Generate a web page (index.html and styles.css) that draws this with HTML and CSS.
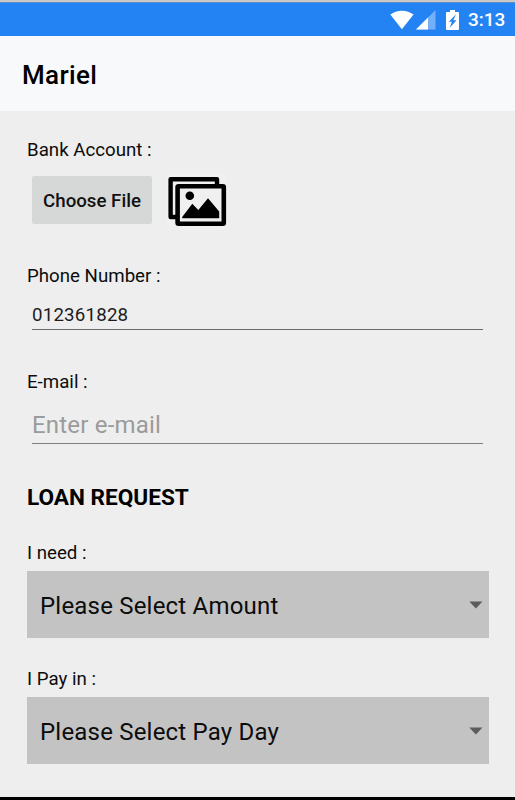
FILE: index.html
```html
<!DOCTYPE html>
<html lang="en">
<head>
    <meta charset="UTF-8" />
    <meta name="viewport" content="width=device-width, initial-scale=1.0" />
    <title>Mariel</title>
    <link rel="stylesheet" href="styles.css">
</head>
<body>
    <div class="screen">
        <div class="status-bar">
            <svg class="wifi" width="24" height="20" viewBox="0 0 24 20">
                <path d="M0.3 4.6C3.6 2 7.6 0.7 11.9 0.7s8.3 1.3 11.6 3.9L11.9 19.3z" fill="#fff"/>
            </svg>
            <svg class="signal" width="20" height="20" viewBox="0 0 20 20">
                <path d="M0 19.5L19.5 0v19.5z" fill="#73b0f8"/>
                <path d="M0 19.5L12 7.5v12z" fill="#fff"/>
            </svg>
            <svg class="battery" width="13" height="20" viewBox="0 0 13 20">
                <path d="M4 0h5v2h3q1 0 1 1v16q0 1-1 1H1q-1 0-1-1V3q0-1 1-1h3z" fill="#fff"/>
                <path d="M10 4.2L2.8 11.8h3L3.8 17.8l6.8-7.6H7.4z" fill="#2483f3"/>
            </svg>
            <span class="clock">3:13</span>
        </div>

        <div class="title-bar">
            <h1>Mariel</h1>
        </div>

        <form class="form">
            <div class="group group-file">
                <label class="label">Bank Account :</label>
                <div class="file-row">
                    <button type="button" class="button">Choose File</button>
                    <svg class="gallery" width="60" height="56" viewBox="0 0 60 56">
                        <rect width="60" height="56" fill="#f0f0f0"/>
                        <path d="M10 43H3.6V5.2H50V11" fill="none" stroke="#000" stroke-width="4.4" stroke-linejoin="round"/>
                        <rect x="10.6" y="12.3" width="46.2" height="37.4" rx="1" fill="#f0f0f0" stroke="#000" stroke-width="4.6"/>
                        <circle cx="22.8" cy="21.8" r="4.3"/>
                        <path d="M15.2 44.2V43L25.3 29.7 31.3 36.1 41 24.3 52.2 37.5v6.7z"/>
                    </svg>
                </div>
            </div>

            <div class="group group-phone">
                <label class="label" for="phone">Phone Number :</label>
                <input type="text" id="phone" class="input input-phone" value="012361828">
            </div>

            <div class="group group-email">
                <label class="label" for="email">E-mail :</label>
                <input type="text" id="email" class="input input-email" placeholder="Enter e-mail">
            </div>

            <h2>LOAN REQUEST</h2>

            <div class="group group-amount">
                <label class="label">I need :</label>
                <div class="select">
                    <span>Please Select Amount</span>
                    <svg width="14" height="8" viewBox="0 0 14 8"><path d="M0.3 0.4h13.2L6.9 7.4z" fill="#5c5c5c"/></svg>
                </div>
            </div>

            <div class="group">
                <label class="label">I Pay in :</label>
                <div class="select">
                    <span>Please Select Pay Day</span>
                    <svg width="14" height="8" viewBox="0 0 14 8"><path d="M0.3 0.4h13.2L6.9 7.4z" fill="#5c5c5c"/></svg>
                </div>
            </div>
        </form>
    </div>
</body>
</html>
```

FILE: styles.css
```css
* {
    box-sizing: border-box;
}

html, body {
    margin: 0;
    padding: 0;
    font-family: Roboto, "Liberation Sans", sans-serif;
    color: #0c0c0c;
}

.screen {
    display: flex;
    flex-direction: column;
    height: 800px;
    overflow: hidden;
    background: #eeeeee;
    border-top: 2px solid #c9c9c9;
    border-bottom: 3px solid #000;
}

.status-bar {
    display: flex;
    align-items: center;
    height: 34px;
    flex-shrink: 0;
    padding-right: 9px;
    background: #2483f3;
    border-top: 1px solid #5d8fc9;
}

.wifi {
    margin-left: auto;
}

.signal {
    margin-left: 2px;
}

.battery {
    margin-left: 10px;
    margin-right: 1px;
}

.clock {
    width: 38px;
    margin-left: 8px;
    padding-top: 1px;
    color: #fff;
    font-size: 19px;
    font-weight: 500;
    line-height: 24px;
    white-space: nowrap;
}

.title-bar {
    display: flex;
    align-items: center;
    height: 75px;
    flex-shrink: 0;
    padding: 3px 22px 0;
    background: #f8f9fb;
}

h1 {
    margin: 0;
    font-size: 26px;
    font-weight: 500;
    line-height: 32px;
    letter-spacing: 0.35px;
    color: #000;
}

.form {
    flex: 1;
    padding: 27px 26px 0 27px;
}

.label {
    display: block;
    font-size: 18.7px;
    line-height: 24px;
}

.group-file {
    height: 126px;
}

.file-row {
    display: flex;
    gap: 15px;
    padding: 14px 0 0 5px;
}

.button {
    width: 120px;
    height: 48px;
    padding: 2px 0 0;
    border: 0;
    border-radius: 2px;
    background: #d6d8d7;
    color: #111;
    font-family: inherit;
    font-size: 18.7px;
    font-weight: 500;
    white-space: nowrap;
}

.gallery {
    margin-top: -2px;
}

.input {
    display: block;
    width: 451px;
    margin-left: 5px;
    padding: 0;
    border: 0;
    border-bottom: 1px solid #6a6a6a;
    outline: none;
    background: transparent;
    color: #1c1c1c;
    font-family: inherit;
    letter-spacing: 0.2px;
}

.input::placeholder {
    color: #9b9b9b;
    opacity: 1;
}

.group-phone {
    height: 106px;
}

.input-phone {
    height: 31px;
    margin-top: 11px;
    padding-top: 2px;
    font-size: 18.7px;
}

.group-email {
    height: 113px;
}

.input-email {
    height: 38px;
    margin-top: 12px;
    font-size: 24px;
    border-bottom-color: #808080;
}

h2 {
    margin: 0 0 29px;
    font-size: 22.6px;
    font-weight: 700;
    line-height: 29px;
    color: #000;
}

.group-amount {
    height: 126px;
}

.select {
    display: flex;
    align-items: center;
    justify-content: space-between;
    height: 67px;
    margin-top: 6px;
    padding: 2px 6px 0 13px;
    background: #c3c3c3;
    font-size: 24px;
    letter-spacing: 0.2px;
    white-space: nowrap;
}

.select svg {
    margin-top: -2px;
}
```
